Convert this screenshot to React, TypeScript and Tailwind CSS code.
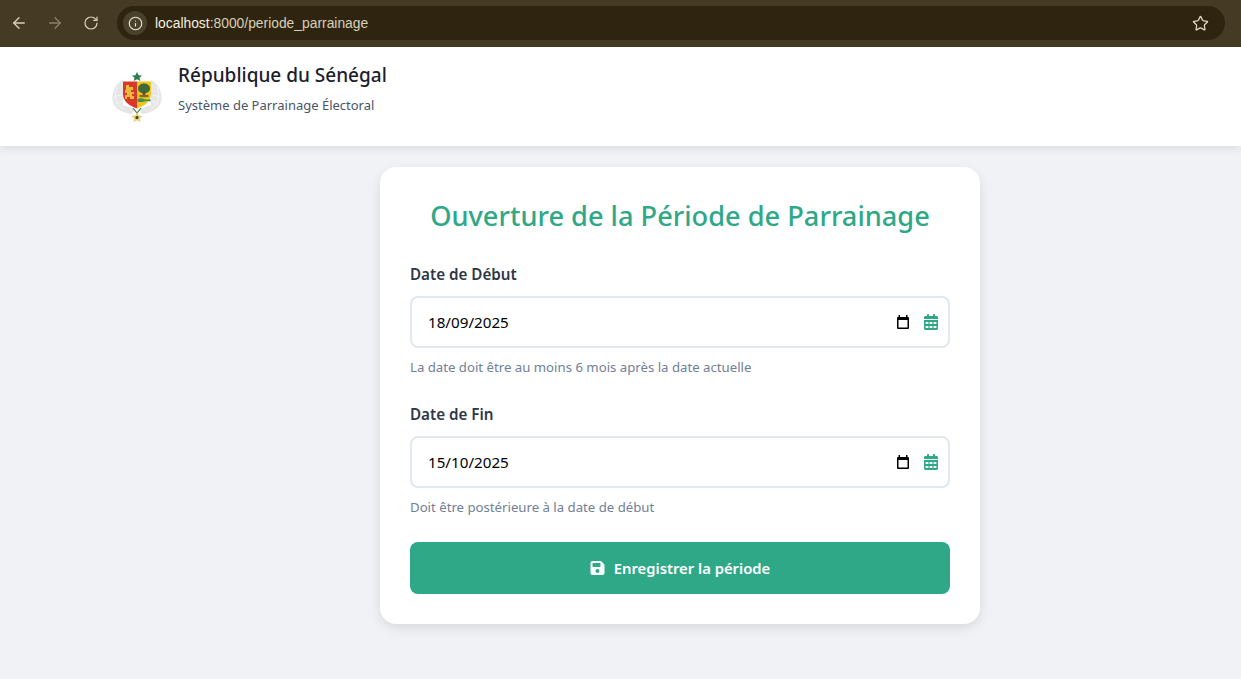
import React from "react";
import { ArrowLeft, ArrowRight, RotateCw, Info, Star } from "lucide-react";

const font = "font-['Noto_Sans','Open_Sans',sans-serif]";

function Logo() {
  return (
    <svg width="52" height="52" viewBox="0 0 52 52" className="shrink-0">
      <defs>
        <filter id="soft" x="-10%" y="-10%" width="120%" height="120%">
          <feGaussianBlur stdDeviation="0.35" />
        </filter>
      </defs>
      <g filter="url(#soft)">
        <path d="M12 9 C3 13 0 24 2 31 C4 38 12 42 21 43 L24 38 L12 34 Z" fill="#e6e6e6" />
        <path d="M40 9 C49 13 52 24 50 31 C48 38 40 42 31 43 L28 38 L40 34 Z" fill="#e6e6e6" />
        <g fill="none" stroke="#f7f7f7" strokeWidth="1">
          <path d="M6 16 C3 24 4 33 12 38" />
          <path d="M46 16 C49 24 48 33 40 38" />
          <path d="M3 26 L10 24 M5 33 L11 30" />
          <path d="M49 26 L42 24 M47 33 L41 30" />
        </g>
        <polygon points="26,1 27.600,4.200 31,4.500 28.500,6.800 29.300,10 26,8.300 22.700,10 23.500,6.800 21,4.500 24.400,4.200" fill="#2e7d4f" />
        <path d="M12 10.500 H26 V37.500 C19 35 12 31 12 23 Z" fill="#d8392b" />
        <path d="M26 10.500 H40 V23 C40 31 33 35 26 37.500 Z" fill="#efc41c" />
        <path d="M15 14 h3 v2 h4 v3 h-2 v2 h3 v2 h-2 v2 h2 v3 h-4 v-2 h-3 v2 h-2 v-4 h2 v-2 h-2 v-3 h1 z" fill="#e9b93c" />
        <ellipse cx="33" cy="17.500" rx="6" ry="5" fill="#3c6a38" />
        <rect x="31.700" y="21" width="2.600" height="4" fill="#6b4a2b" />
        <ellipse cx="33" cy="25" rx="5" ry="1.300" fill="#7c6a2c" />
        <path d="M26.500 28 Q30 26.500 33 28 T39.500 28 V30.500 Q36 29.500 33 30.500 T26.500 30.500 Z" fill="#3f8f45" />
        <path d="M22 37 L26 42 L30 37" fill="none" stroke="#3f7f50" strokeWidth="1.200" />
        <polygon points="26,41 27.600,44.500 31.500,45 28.700,47.500 29.500,51 26,49.200 22.500,51 23.300,47.500 20.500,45 24.400,44.500" fill="#e6cf73" />
        <circle cx="26" cy="46.500" r="1.500" fill="#3a3a2a" />
      </g>
    </svg>
  );
}

function GreenCalendar() {
  return (
    <svg width="14" height="16" viewBox="0 0 448 512" fill="#2fa888" className="shrink-0">
      <path d="M96 32V64H48C21.500 64 0 85.500 0 112v48H448V112c0-26.500-21.500-48-48-48H352V32c0-17.700-14.300-32-32-32s-32 14.300-32 32V64H160V32c0-17.700-14.300-32-32-32S96 14.300 96 32zM448 192H0V464c0 26.500 21.500 48 48 48H400c26.500 0 48-21.500 48-48V192zM64 256h64c8.800 0 16 7.200 16 16v32c0 8.800-7.200 16-16 16H64c-8.800 0-16-7.200-16-16V272c0-8.800 7.200-16 16-16zm128 0h64c8.800 0 16 7.200 16 16v32c0 8.800-7.200 16-16 16H192c-8.800 0-16-7.200-16-16V272c0-8.800 7.200-16 16-16zm128 0h64c8.800 0 16 7.200 16 16v32c0 8.800-7.200 16-16 16H320c-8.800 0-16-7.200-16-16V272c0-8.800 7.200-16 16-16zM64 384h64c8.800 0 16 7.200 16 16v32c0 8.800-7.200 16-16 16H64c-8.800 0-16-7.200-16-16V400c0-8.800 7.200-16 16-16zm128 0h64c8.800 0 16 7.200 16 16v32c0 8.800-7.200 16-16 16H192c-8.800 0-16-7.200-16-16V400c0-8.800 7.200-16 16-16zm128 0h64c8.800 0 16 7.200 16 16v32c0 8.800-7.200 16-16 16H320c-8.800 0-16-7.200-16-16V400c0-8.800 7.200-16 16-16z" />
    </svg>
  );
}

function NativeCalendar() {
  return (
    <svg width="16" height="16" viewBox="0 0 16 16" className="shrink-0">
      <path d="M3.500 1h1.500v2h6V1h1.500v2h.5a1 1 0 0 1 1 1v10a1 1 0 0 1-1 1H3a1 1 0 0 1-1-1V4a1 1 0 0 1 1-1h.5zM3.500 6v7.500h9V6z" fill="#000" fillRule="evenodd" />
    </svg>
  );
}

function DateField({ label, value, hint }: { label: string; value: string; hint: string }) {
  return (
    <div className="flex flex-col">
      <label className="text-[15.2px] leading-[21px] font-semibold text-[#2d3748] mb-[11px]">{label}</label>
      <div className="h-[52px] border-2 border-[#e2e8f0] rounded-[8px] bg-white flex items-center pl-[16px] pr-[10px]">
        <span className="flex-1 text-[15.2px] text-black">{value}</span>
        <NativeCalendar />
        <span className="ml-[13px]"><GreenCalendar /></span>
      </div>
      <p className="text-[13.2px] leading-[19px] text-[#718096] mt-[10px] mb-[-1px]">{hint}</p>
    </div>
  );
}

export default function App() {
  return (
    <div className={`${font} w-[1241px] h-[679px] overflow-hidden flex flex-col bg-[#f0f2f5]`}>
      <div className="h-[47px] shrink-0 bg-[#453a23] flex items-center pl-[10px] pr-[16px] pb-[1px]">
        <div className="flex items-center gap-[18px] text-[#d9d0b8]">
          <ArrowLeft size={18} strokeWidth={1.8} />
          <ArrowRight size={18} strokeWidth={1.8} className="text-[#8b8167]" />
          <RotateCw size={16} strokeWidth={1.8} className="ml-[1px]" />
        </div>
        <div className="ml-[18px] flex-1 h-[34px] rounded-full bg-[#2e240f] flex items-center pl-[6px] pr-[16px]">
          <span className="w-[24px] h-[24px] rounded-full bg-[#4a412c] flex items-center justify-center text-[#efe7d2]">
            <Info size={15} strokeWidth={1.8} />
          </span>
          <span className="ml-[8px] flex-1 text-[13.85px] pt-[1px] font-['Liberation_Sans',sans-serif] text-[#d9d0b8]">
            <span className="text-[#f5efe0]">localhost</span>:8000/periode_parrainage
          </span>
          <Star size={17} strokeWidth={1.8} className="text-[#e0d8c4]" />
        </div>
      </div>

      <header className="h-[99px] shrink-0 bg-white shadow-[0_2px_10px_rgba(0,0,0,0.1)] flex items-center pl-[111px] relative z-10">
        <Logo />
        <div className="ml-[15px] flex flex-col -mt-[16px]">
          <h1 className="text-[19px] leading-[26px] font-medium text-[#1a202c]">République du Sénégal</h1>
          <p className="text-[13px] leading-[19px] text-[#4a5568] mt-[8px]">Système de Parrainage Électoral</p>
        </div>
      </header>

      <main className="flex-1 flex justify-center pt-[21px] pl-[119px]">
        <div className="w-[600px] h-[457px] bg-white rounded-[16px] shadow-[0_4px_12px_rgba(0,0,0,0.1)] p-[30px] flex flex-col">
          <h2 className="text-[27.2px] leading-[39px] font-medium text-[#2fa888] text-center -mt-[1px]">
            Ouverture de la Période de Parrainage
          </h2>
          <div className="mt-[29px]">
            <DateField label="Date de Début" value="18/09/2025" hint="La date doit être au moins 6 mois après la date actuelle" />
          </div>
          <div className="mt-[28px]">
            <DateField label="Date de Fin" value="15/10/2025" hint="Doit être postérieure à la date de début" />
          </div>
          <button className="mt-[26px] h-[52px] rounded-[8px] bg-[#2fa888] text-white flex items-center justify-center gap-[9px] text-[14.8px] font-semibold">
            <svg width="15" height="16" viewBox="0 0 448 512" fill="#fff">
              <path d="M64 32C28.700 32 0 60.700 0 96V416c0 35.300 28.700 64 64 64H384c35.300 0 64-28.700 64-64V173.300c0-17-6.700-33.300-18.700-45.300L352 50.700C340 38.700 323.700 32 306.700 32H64zm0 96c0-17.700 14.300-32 32-32H288c17.700 0 32 14.300 32 32v64c0 17.700-14.300 32-32 32H96c-17.700 0-32-14.300-32-32V128zM224 288a64 64 0 1 1 0 128 64 64 0 1 1 0-128z" />
            </svg>
            Enregistrer la période
          </button>
        </div>
      </main>
    </div>
  );
}
